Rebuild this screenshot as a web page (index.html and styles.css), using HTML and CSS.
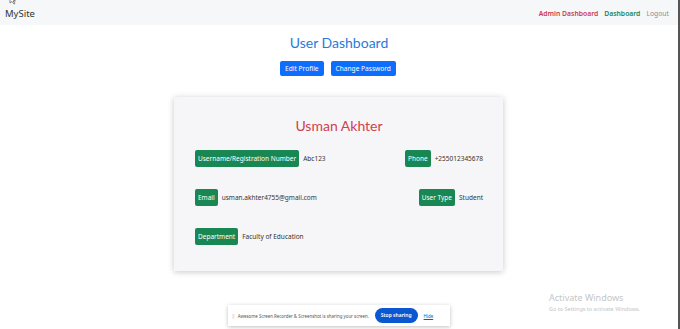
FILE: index.html
```html
<!DOCTYPE html>
<html>
<head>
    <title>User Dashboard</title>
    <link rel="stylesheet" href="styles.css">
</head>
<body>
    <div class="page">
        <nav class="navbar">
            <span class="brand">MySite</span>
            <div class="nav-links">
                <a class="nav-admin" href="#">Admin Dashboard</a>
                <a class="nav-dash" href="#">Dashboard</a>
                <a class="nav-logout" href="#">Logout</a>
            </div>
        </nav>

        <h1 class="title">User Dashboard</h1>
        <div class="actions">
            <a class="btn" href="#">Edit Profile</a>
            <a class="btn" href="#">Change Password</a>
        </div>

        <div class="card">
            <h2 class="name">Usman Akhter</h2>
            <div class="row">
                <div class="field"><span class="label">Username/Registration Number</span> Abc123</div>
                <div class="field"><span class="label">Phone</span> +255012345678</div>
            </div>
            <div class="row">
                <div class="field"><span class="label">Email</span> usman.akhter4755@gmail.com</div>
                <div class="field"><span class="label">User Type</span> Student</div>
            </div>
            <div class="row">
                <div class="field"><span class="label">Department</span> Faculty of Education</div>
            </div>
        </div>
    </div>

    <svg class="cursor" width="8" height="8" viewBox="0 0 8 8">
        <path d="M1 0 L1 5 L3 3.5 L5 6 L6 5.5 L4 3 L6.5 3 Z" fill="#fff" stroke="#555" stroke-width="0.7"/>
    </svg>

    <div class="watermark">
        <div class="wm-title">Activate Windows</div>
        <div class="wm-sub">Go to Settings to activate Windows.</div>
    </div>

    <div class="share-bar">
        <span class="share-icon">&#8214;</span>
        <span class="share-text">Awesome Screen Recorder &amp; Screenshot is sharing your screen.</span>
        <span class="stop">Stop sharing</span>
        <span class="hide">Hide</span>
    </div>
</body>
</html>
```

FILE: styles.css
```css
body {
    margin: 0;
    font-family: "Noto Sans", "Open Sans", sans-serif;
    color: #212529;
    background: #fff;
}
.page {
    min-height: 329px;
    border-right: 2px solid #555;
    box-sizing: border-box;
    background: #fff;
}
.navbar {
    height: 25px;
    background: #f6f7f8;
    display: flex;
    align-items: center;
    justify-content: space-between;
    padding: 2px 9px 0 5px;
    box-sizing: border-box;
}
.brand {
    font-size: 9.5px;
    color: #333;
}
.nav-links {
    display: flex;
    gap: 6px;
    font-size: 6.8px;
}
.nav-links a {
    text-decoration: none;
}
.nav-admin {
    color: #d0384a;
    font-weight: 600;
}
.nav-dash {
    color: #198754;
    font-weight: 600;
}
.nav-logout {
    color: #8a8f94;
}
.title {
    margin: 8px 0 0;
    text-align: center;
    font-family: Lato, "Noto Sans", sans-serif;
    font-size: 14px;
    font-weight: 400;
    color: #2b7ad8;
    line-height: 20px;
}
.actions {
    display: flex;
    justify-content: center;
    gap: 7px;
    margin-top: 8px;
    padding-right: 2px;
}
.btn {
    background: #0d6efd;
    color: #fff;
    font-size: 6.6px;
    line-height: 15px;
    padding: 0 5px;
    border-radius: 2px;
    text-decoration: none;
}
.card {
    width: 329px;
    box-sizing: border-box;
    margin: 21px 0 0 174px;
    background: #f6f6f8;
    box-shadow: 0 1px 6px rgba(0, 0, 0, 0.22);
    padding: 18px 20px 26px 21px;
}
.name {
    margin: 0 0 13px;
    text-align: center;
    font-family: Lato, "Noto Sans", sans-serif;
    font-size: 14px;
    font-weight: 400;
    color: #d0404e;
    line-height: 22px;
}
.row {
    display: flex;
    justify-content: space-between;
    align-items: center;
    margin-bottom: 22px;
}
.row:last-child {
    margin-bottom: 0;
}
.field {
    font-size: 6.5px;
    color: #333;
    display: flex;
    align-items: center;
    gap: 4px;
}
.label {
    background: #198754;
    color: #fff;
    line-height: 17px;
    padding: 0 3px;
    border-radius: 2px;
}
.cursor {
    position: absolute;
    left: 9px;
    top: -2px;
}
.watermark {
    position: absolute;
    left: 549px;
    top: 291px;
    color: #c4c6c8;
}
.wm-title {
    font-size: 9px;
}
.wm-sub {
    font-size: 5.5px;
    margin-top: 1px;
}
.share-bar {
    position: absolute;
    left: 228px;
    top: 305px;
    width: 222px;
    height: 21px;
    box-sizing: border-box;
    background: #fff;
    box-shadow: 0 1px 4px rgba(0, 0, 0, 0.25);
    display: flex;
    align-items: center;
    padding: 0 4px;
    gap: 3px;
    font-size: 4.4px;
    color: #555;
}
.share-icon {
    color: #bbb;
    font-size: 5px;
}
.stop {
    background: #0b57d0;
    color: #fff;
    font-weight: 600;
    font-size: 5px;
    border-radius: 8px;
    padding: 0 6px;
    line-height: 15px;
    margin-left: 3px;
}
.hide {
    color: #0b57d0;
    margin-left: 3px;
    text-decoration: underline;
}
```
